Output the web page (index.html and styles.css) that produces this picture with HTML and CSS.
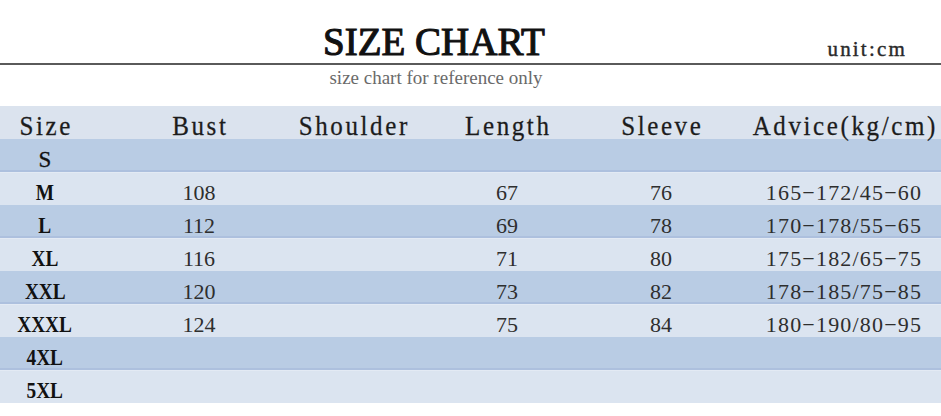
FILE: index.html
```html
<!DOCTYPE html>
<html lang="en">
<head>
<meta charset="utf-8">
<title>Size Chart</title>
<link rel="stylesheet" href="styles.css">
</head>
<body>
<div class="page">
  <div class="head">
    <div></div>
    <h1 class="title">SIZE CHART</h1>
    <div class="unit">unit:cm</div>
  </div>
  <div class="rule"></div>
  <p class="sub">size chart for reference only</p>

  <div class="chart">
    <div class="row hdr">
      <div class="c c1"><span class="h">Size</span></div>
      <div class="c"><span class="h">Bust</span></div>
      <div class="c"><span class="h">Shoulder</span></div>
      <div class="c"><span class="h">Length</span></div>
      <div class="c"><span class="h">Sleeve</span></div>
      <div class="c cl"><span class="h">Advice(kg/cm)</span></div>
    </div>
    <div class="row dark">
      <div class="c c1 sz"><span class="lbl thin">S</span></div>
      <div class="c"></div><div class="c"></div><div class="c"></div><div class="c"></div><div class="c cl"></div>
    </div>
    <div class="row light">
      <div class="c c1 sz"><span class="lbl">M</span></div>
      <div class="c num">108</div><div class="c num"></div><div class="c num">67</div><div class="c num">76</div><div class="c cl num adv">165−172/45−60</div>
    </div>
    <div class="row dark">
      <div class="c c1 sz"><span class="lbl">L</span></div>
      <div class="c num">112</div><div class="c num"></div><div class="c num">69</div><div class="c num">78</div><div class="c cl num adv">170−178/55−65</div>
    </div>
    <div class="row light">
      <div class="c c1 sz"><span class="lbl">XL</span></div>
      <div class="c num">116</div><div class="c num"></div><div class="c num">71</div><div class="c num">80</div><div class="c cl num adv">175−182/65−75</div>
    </div>
    <div class="row dark">
      <div class="c c1 sz"><span class="lbl">XXL</span></div>
      <div class="c num">120</div><div class="c num"></div><div class="c num">73</div><div class="c num">82</div><div class="c cl num adv">178−185/75−85</div>
    </div>
    <div class="row light">
      <div class="c c1 sz"><span class="lbl">XXXL</span></div>
      <div class="c num">124</div><div class="c num"></div><div class="c num">75</div><div class="c num">84</div><div class="c cl num adv">180−190/80−95</div>
    </div>
    <div class="row dark">
      <div class="c c1 sz"><span class="lbl">4XL</span></div>
      <div class="c"></div><div class="c"></div><div class="c"></div><div class="c"></div><div class="c cl"></div>
    </div>
    <div class="row light">
      <div class="c c1 sz"><span class="lbl">5XL</span></div>
      <div class="c"></div><div class="c"></div><div class="c"></div><div class="c"></div><div class="c cl"></div>
    </div>
  </div>
</div>
</body>
</html>
```

FILE: styles.css
```css
* { box-sizing: border-box; }

html, body {
  margin: 0;
  padding: 0;
  background: #ffffff;
}

.page {
  width: 941px;
  height: 416px;
  overflow: hidden;
  font-family: "Liberation Serif", "Times New Roman", serif;
}

.head {
  display: grid;
  grid-template-columns: 323px auto 1fr;
  height: 63px;
}

.title {
  margin: 22px 0 0;
  font-size: 39px;
  line-height: 39px;
  font-weight: normal;
  color: #111;
  -webkit-text-stroke: 1.1px #111;
  white-space: nowrap;
}

.unit {
  margin-top: 39px;
  padding-right: 34px;
  text-align: right;
  font-size: 21px;
  line-height: 21px;
  letter-spacing: 2.2px;
  color: #2a2a2a;
  -webkit-text-stroke: 0.4px #2a2a2a;
}

.rule {
  height: 2px;
  background: #5a5a5a;
}

.sub {
  width: 872px;
  margin: 3px 0 0;
  text-align: center;
  font-size: 19px;
  line-height: 19px;
  color: #6a6a6a;
}

.chart {
  margin-top: 19px;
}

.row {
  display: grid;
  grid-template-columns: 122px 154px 154px 154px 154px 1fr;
  height: 33px;
}

.hdr { background: #dbe3ee; }
.light { background: #dbe4f0; box-shadow: inset 0 1px 0 #e3eaf4; }
.dark { background: #b9cce4; box-shadow: inset 0 -2px 0 #adc0de; }

.c {
  height: 33px;
  text-align: center;
  white-space: nowrap;
}

.c1 { padding-right: 32px; }
.cl { padding-left: 9px; }

.hdr .c {
  padding-top: 8px;
}

.h {
  display: inline-block;
  font-family: "Liberation Serif", "Times New Roman", serif;
  font-size: 25px;
  line-height: 25px;
  letter-spacing: 2.6px;
  margin-right: -2.6px;
  color: #1c1c1c;
  -webkit-text-stroke: 0.25px #1c1c1c;
  transform: scaleY(1.08);
  transform-origin: 50% 19px;
}

.num {
  padding-top: 10px;
  font-size: 22px;
  line-height: 22px;
  color: #2e2e2e;
}

.adv {
  letter-spacing: 1.2px;
}

.sz {
  padding-top: 9px;
}

.lbl {
  display: inline-block;
  font-size: 23px;
  line-height: 23px;
  font-weight: bold;
  color: #111;
  transform: scaleX(0.84);
}

.lbl.thin {
  font-weight: normal;
  transform: none;
  -webkit-text-stroke: 0.3px #111;
}
```
